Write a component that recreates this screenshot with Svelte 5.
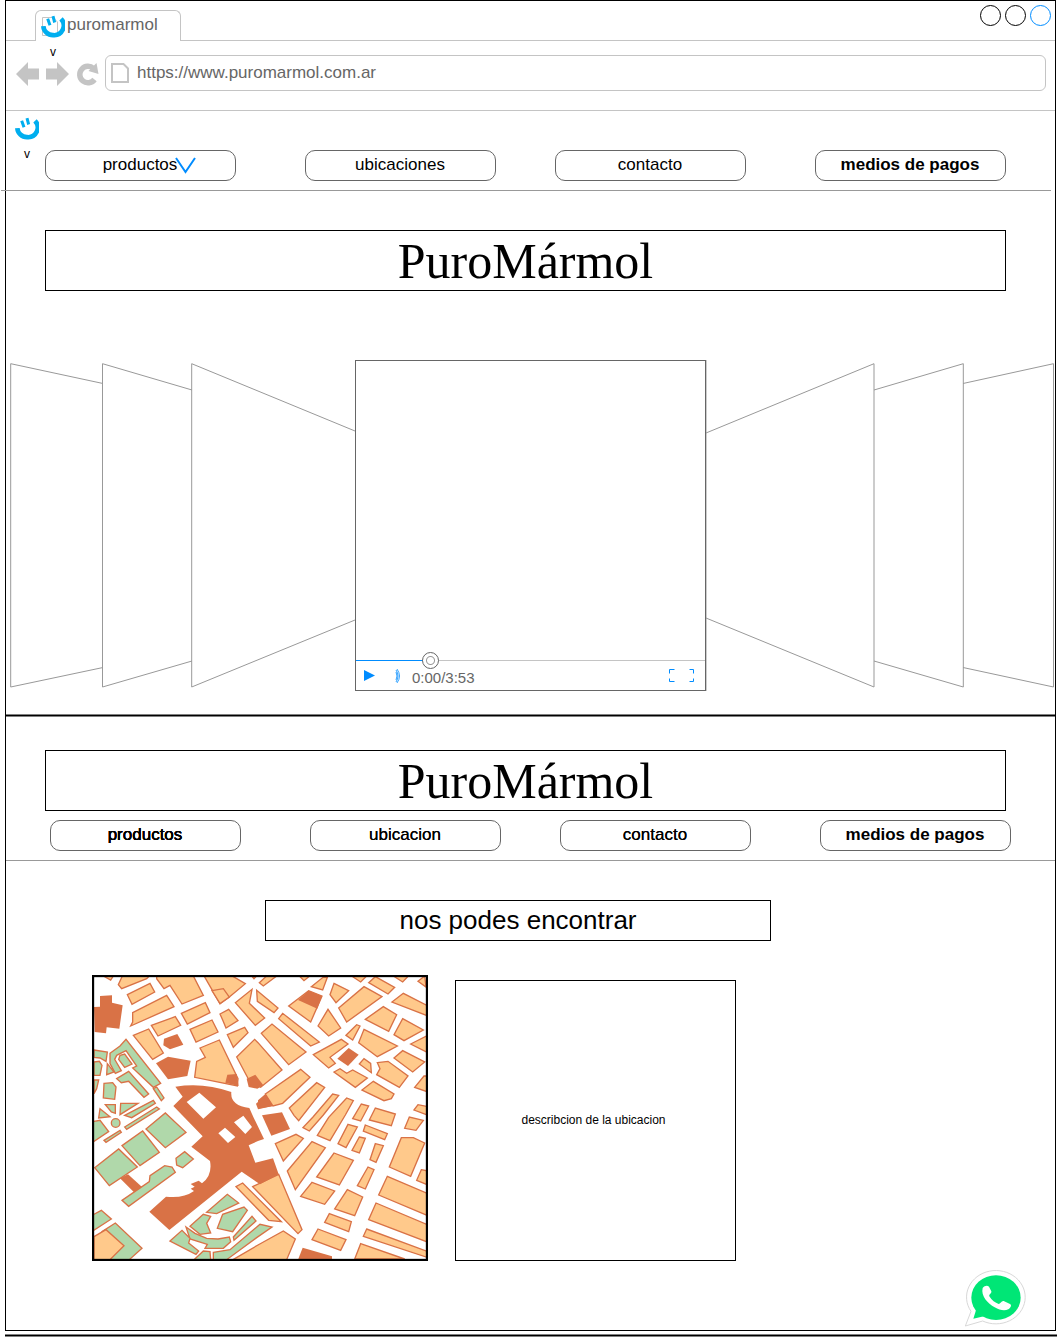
<script>
  const topMenu = [
    { label: 'productos', open: true },
    { label: 'ubicaciones' },
    { label: 'contacto' },
    { label: 'medios de pagos', bold: true }
  ];
  const placesMenu = [
    { label: 'productos', heavy: true },
    { label: 'ubicacion', firm: true },
    { label: 'contacto', firm: true },
    { label: 'medios de pagos', bold: true }
  ];

  let progress = $state(20);
  let url = $state('https://www.puromarmol.com.ar');

  // City map, drawn in four tiles; every entry is one block of buildings or one park.
  const tiles = [
    {
      x: 0, y: 0,
      blocks: [
        '40,12 70,12 62,24', '97,12 85,38 95,50 170,20 180,10', '112,68 180,34 194,60 126,97',
        '128,122 230,70 252,104 122,162 128,150', '200,8 200,20 222,50 240,40 276,96 340,70 308,8',
        '184,160 256,134 272,160 204,192', '130,190 176,171 220,243 188,262',
        '274,124 346,92 360,122 292,156', '300,172 366,144 384,180 318,210',
        '390,126 416,112 444,146 408,168 398,144', '340,8 390,95 418,75 466,35 420,8',
        '366,56 400,50 418,75 390,95', '436,92 486,52 478,94 524,138 496,160',
        '500,55 564,108 552,122 502,88', '508,32 532,10 560,12 520,42', '482,8 504,8 492,20',
        '412,188 464,166 474,182 430,226', '330,228 388,204 444,320 442,342 314,316 320,268 346,256',
        '440,255 494,202 504,212 576,294 512,346 480,330'
      ],
      parks: [
        '12,234 52,240 48,268 30,258 12,256', '12,270 28,268 36,280 30,310 12,310', '50,308 52,275 72,300',
        '60,244 90,222 108,202 212,334 190,346 128,288 140,282 108,236 80,250 74,262 94,296 76,304 60,275',
        '190,350 200,345 222,378 214,386', '90,250 104,246 126,276 104,286 86,262',
        '80,320 116,298 176,366 162,376 116,328 94,332', '42,334 68,332 78,345 74,382 40,378',
        '12,324 26,324 20,350 12,365', '46,398 76,398 76,424 64,420', '92,394 144,394 90,428',
        '30,410 60,434 26,438', '104,430 190,385 196,394 125,437', '104,465 200,405 208,411 110,472'
      ],
      landmarks: [
        '30,72 66,70 66,92 98,100 88,170 50,166 48,184 14,180 12,105 30,104',
        '222,200 262,186 280,218 240,232 220,220', '198,274 234,254 302,266 292,312 234,322',
        '412,308 440,306 446,342 406,332', '470,320 496,308 520,340 502,350 476,345',
        '516,430 576,421 600,471 544,491', '498,395 528,368 549,402 504,412'
      ]
    },
    {
      x: 504, y: 0,
      blocks: [
        '160,44 195,16 208,16 194,54', '120,8 155,12 138,26', '275,8 330,8 308,30', '400,8 455,8 434,30',
        '480,28 500,12 504,45', '228,34 272,56 234,92 216,68', '332,32 352,14 410,46 390,66',
        '402,90 436,64 510,102 510,132', '242,108 318,44 372,74 266,150', '92,102 152,56 192,72 158,150',
        '180,162 210,112 248,168 212,192', '322,142 376,104 416,128 392,178',
        '434,140 496,174 438,206 408,188', '62,140 74,124 184,210 158,222', '10,184 42,156 144,240 92,278',
        '264,190 296,158 306,162 284,204', '318,172 418,222 358,254 302,212', '458,216 510,190 510,242',
        '166,248 250,202 270,216 216,256 232,274 212,288', '304,276 318,260 338,274 340,302',
        '228,300 246,290 266,304 284,294 328,318 292,346', '358,272 390,268 450,312 424,346 356,308 366,290',
        '408,258 434,236 500,270 464,300', '312,354 346,328 408,366 400,380 378,386',
        '470,346 498,312 510,312 510,360', '468,414 480,398 510,404 510,430',
        '22,366 128,292 156,316 74,394 45,402', '94,408 176,332 200,346 122,446 108,430',
        '135,467 154,477 196,429 242,370 224,366 165,435', '178,490 212,436 266,378 286,386 262,429 216,506',
        '284,440 310,396 332,402 308,447', '334,444 352,408 412,426 400,461'
      ],
      parks: [],
      landmarks: ['120,84 152,56 192,72 178,110', '238,260 272,228 302,248 270,282', '0,385 22,366 45,402 0,410']
    },
    {
      x: 0, y: 429,
      blocks: [],
      parks: [
        '8,20 30,16 56,50 8,82', '42,76 90,46 94,52 48,82', '168,42 226,-6 288,52 226,98',
        '96,92 158,48 208,112 150,152', '14,158 86,102 142,156 58,212',
        '258,130 284,110 310,132 278,158 260,150', '96,256 178,200 180,182 224,152 246,156 256,172 116,274',
        '8,300 34,286 64,312 8,348', '36,350 76,324 156,400 118,434 60,434',
        '350,292 412,238 446,264 380,296', '382,340 398,298 462,276 472,286 428,350',
        '300,334 340,298 362,304 350,325 362,354 330,358',
        '288,336 315,355 350,370 384,372 418,366 422,380 400,400 345,400 352,388 300,372',
        '240,378 276,346 300,370 296,384 326,408 318,418', '430,366 486,304 498,318 432,376',
        '312,434 340,408 360,410 362,434', '370,412 420,404 510,328 546,336 500,368 410,434 370,434'
      ],
      landmarks: ['90,190 114,178 156,216 132,232']
    },
    {
      x: 504, y: 429,
      blocks: [
        '52,86 114,58 136,70 76,138', '88,168 162,80 202,98 112,224', '270,28 298,36 264,98 240,86',
        '304,66 322,70 304,114 282,106', '322,30 388,56 380,74 316,48', '440,40 454,6 496,16 474,46',
        '430,68 466,68 500,84 458,184 394,156', '352,86 376,92 354,142 336,134',
        '228,114 286,136 244,210 176,186', '330,156 348,164 322,222 298,212', '490,164 510,168 510,210 476,196',
        '388,184 510,236 510,302 362,240', '162,202 230,228 200,268 128,244',
        '268,224 314,246 290,302 230,282', '354,264 510,330 510,382 332,314',
        '214,296 280,320 272,350 200,322', '326,342 510,410 510,428 316,364',
        '180,342 264,374 248,406 162,374', '308,386 440,432 290,432',
        '-16,215 62,178 132,344 120,356', '-66,215 -46,204 70,320 32,316',
        '-75,434 0,390 76,348 112,372 86,434', '-492,365 -456,344 -402,392 -444,434 -492,434'
      ],
      parks: [],
      landmarks: ['134,398 222,424 222,434 120,434']
    }
  ];
</script>

{#snippet smile()}
  <svg class="smile" viewBox="46 350 72 68" aria-hidden="true">
    <path d="M53 383A29 29 0 0 0 82 410A29 29 0 0 0 106 361" fill="none" stroke="#00aeef" stroke-width="14" />
    <path d="M66 361L73 380M82 353L87 372" stroke="#00aeef" stroke-width="9" />
  </svg>
{/snippet}

{#snippet menu(items)}
  {#each items as item}
    <button type="button" class="pill" class:bold={item.bold} class:heavy={item.heavy} class:firm={item.firm}>
      <span class="pill-label">
        {item.label}
        {#if item.open}
          <svg class="chevron" viewBox="0 0 21 17" aria-hidden="true"><path d="M1 1L10.500 15L20 1" fill="none" stroke="#008cff" stroke-width="2" /></svg>
        {/if}
      </span>
    </button>
  {/each}
{/snippet}

<div class="page">
  <div class="frame">
    <div class="tabs">
      <div class="tab">
        <span class="tab-icon">
          <svg class="tab-doc" viewBox="0 0 16 19" aria-hidden="true"><path d="M.5.5H11L15.500 5V18.500H.5Z" fill="none" stroke="#c4c4c4" /></svg>
          <span class="tab-brand">{@render smile()}<span class="caption">v</span></span>
        </span>
        <span>puromarmol</span>
      </div>
      <div class="controls">
        <button type="button" aria-label="Minimizar"></button>
        <button type="button" aria-label="Maximizar"></button>
        <button type="button" class="close" aria-label="Cerrar"></button>
      </div>
    </div>

    <div class="toolbar">
      <div class="tools">
        <button type="button" class="tool" aria-label="Atrás">
          <svg viewBox="0 0 24 24"><path d="M0 12L12 0V6.500H23V17.500H12V24Z" fill="#c4c4c4" /></svg>
        </button>
        <button type="button" class="tool" aria-label="Adelante">
          <svg viewBox="0 0 24 24"><path d="M23 12L11 0V6.500H0V17.500H11V24Z" fill="#c4c4c4" /></svg>
        </button>
        <button type="button" class="tool" aria-label="Recargar">
          <svg viewBox="0 0 24 24"><path d="M18.500 17.500A8.200 8.200 0 1 1 17.500 6.500" fill="none" stroke="#c4c4c4" stroke-width="5.500" /><path d="M20.500 1L22.500 12L12.500 9Z" fill="#c4c4c4" /></svg>
        </button>
      </div>
      <label class="address">
        <svg viewBox="0 0 18 20" aria-hidden="true"><path d="M1 1H12.500L17 5.500V19H1Z" fill="none" stroke="#c4c4c4" stroke-width="2" /></svg>
        <input type="text" aria-label="Dirección" bind:value={url} />
      </label>
    </div>

    <header>
      <a class="brand" href="#inicio" aria-label="Inicio">{@render smile()}<span class="caption">v</span></a>
      <nav>{@render menu(topMenu)}</nav>
    </header>

    <h1 class="title">PuroMármol</h1>

    <section class="carousel">
      <svg class="slides" viewBox="6 360 349 331" preserveAspectRatio="none" aria-hidden="true">
        <path d="M103 383.500L10.700 363.700V687L103 667.500M192 390L102.500 363.700V687L192 661M355 431L191.700 363.700V687L355 620" />
      </svg>
      <div class="video">
        <div class="screen"></div>
        <input class="seek" type="range" min="0" max="100" aria-label="Progreso" bind:value={progress} />
        <div class="player">
          <button type="button" aria-label="Reproducir">
            <svg width="11" height="11" viewBox="0 0 11 11"><path d="M0 0L11 5.500L0 11Z" fill="#008cff" /></svg>
          </button>
          <button type="button" class="volume" aria-label="Volumen">
            <svg width="6" height="16" viewBox="0 0 6 16"><path d="M1 4Q3 8 1 12M1 2Q5 8 1 14M2 1Q7 8 2 15" fill="none" stroke="#008cff" stroke-width=".8" /></svg>
          </button>
          <span class="time">0:00/3:53</span>
          <button type="button" class="full" aria-label="Pantalla completa">
            <svg width="26" height="14" viewBox="0 0 26 14"><path d="M5.500.5H.5V4.500M.5 9.500V12.500H5.500M20.500.5H24.500V4.500M24.500 9.500V12.500H20.500" fill="none" stroke="#008cff" /></svg>
          </button>
        </div>
      </div>
      <svg class="slides" viewBox="706 360 349 331" preserveAspectRatio="none" aria-hidden="true">
        <path d="M706 433L874 363.700V687L706 618M874 390L963.300 363.700V687L874 661M963 383.500L1053.500 363.700V687L963 667.500" />
      </svg>
    </section>

    <div class="rule"></div>

    <h2 class="title second">PuroMármol</h2>
    <nav class="places-nav">{@render menu(placesMenu)}</nav>

    <section class="places">
      <h3>nos podes encontrar</h3>
      <div class="cards">
        <svg class="map" viewBox="6 9 1008 858" role="img" aria-label="Mapa de la ubicación">
          {#each tiles as tile}
            <g transform="translate({tile.x} {tile.y})">
              {#each tile.parks as points}<polygon class="park" {points} />{/each}
              {#each tile.blocks as points}<polygon class="block" {points} />{/each}
              {#each tile.landmarks as points}<polygon class="landmark" {points} />{/each}
            </g>
          {/each}
          <circle class="park" cx="77" cy="453" r="13" />
          <path
            class="landmark"
            fill-rule="evenodd"
            d="M256 344Q340 330 424 360Q420 400 478 408L490 435L522 501L504 507L476 520L496 572L549 559L566 607L510 637L455 599L238 774L178 719L228 674Q280 680 312 657L302 650L314 644L302 636L326 626L336 634Q368 610 360 567L304 524L338 493L276 429L250 402L278 374ZM290 390L328 362L378 406L340 440ZM385 484L405 467L436 495L414 513ZM432 451L460 431L486 465L466 486Z"
          />
          <rect x="9" y="12" width="1002" height="852" fill="none" stroke="#000" stroke-width="7" />
        </svg>
        <p class="description">describcion de la ubicacion</p>
      </div>
      <a class="whatsapp" href="#whatsapp" aria-label="WhatsApp">
        <svg viewBox="45 28 183 171">
          <path d="M46 196L63 152A88 80 0 1 1 98 181Z" fill="#fff" stroke="#d8d8d8" stroke-width="3" />
          <ellipse cx="138" cy="111" rx="74" ry="67" fill="#00e676" />
          <path d="M70 174L79 145L108 165Z" fill="#00e676" />
          <path d="M98 82C104 74 113 73 117 78L124 92C126 97 116 102 118 107C125 119 136 127 146 130C151 130 155 119 161 121L180 130C186 133 182 142 175 146C164 152 149 149 134 140C113 128 92 106 98 82Z" fill="#fff" />
        </svg>
      </a>
    </section>
  </div>
  <div class="rule end"></div>
</div>

<style>
  :global(body) {
    background: #fff;
  }
  .page {
    font-family: 'Liberation Sans', Arial, sans-serif;
    font-size: 17px;
    color: #000;
    padding-bottom: 5px;
  }
  .page * {
    box-sizing: border-box;
  }
  button {
    font: inherit;
    color: inherit;
    background: none;
    border: 0;
    padding: 0;
  }
  svg {
    display: block;
  }
  .frame {
    margin: 0 1px 0 5px;
    border: 1px solid #000;
  }
  .tabs {
    display: flex;
    justify-content: space-between;
    height: 40px;
    border-bottom: 1px solid #c4c4c4;
  }
  .tab {
    display: flex;
    gap: 9px;
    width: 146px;
    height: 31px;
    margin: 9px 0 0 29px;
    padding: 6px 6px 0;
    border: 1px solid #c4c4c4;
    border-bottom: 0;
    border-radius: 6px 6px 0 0;
    background: #fff;
    color: #666;
    line-height: 16px;
  }
  .tab-icon {
    position: relative;
    width: 16px;
  }
  .tab-doc {
    width: 16px;
    height: 19px;
  }
  .tab-brand {
    position: absolute;
    top: -2px;
    left: -1px;
    width: 24px;
  }
  .smile {
    width: 24px;
    height: 23px;
  }
  .caption {
    display: block;
    padding-top: 7px;
    font-size: 12px;
    line-height: 14px;
    text-align: center;
    color: #000;
  }
  .controls {
    display: flex;
    gap: 4px;
    padding: 4px 4px 0 0;
  }
  .controls button {
    width: 21px;
    height: 21px;
    border: 1px solid #000;
    border-radius: 50%;
  }
  .controls .close {
    border-color: #008cff;
  }
  .toolbar {
    display: flex;
    gap: 5px;
    height: 70px;
    padding: 14px 9px 0 10px;
    border-bottom: 1px solid #c4c4c4;
  }
  .tools {
    display: flex;
    gap: 6px;
    padding-top: 7px;
  }
  .tool {
    width: 24px;
    height: 24px;
  }
  .address {
    display: flex;
    flex: 1;
    align-items: center;
    gap: 8px;
    height: 36px;
    padding: 0 5px;
    border: 1px solid #c4c4c4;
    border-radius: 6px;
  }
  .address svg {
    width: 18px;
    height: 20px;
  }
  .address input {
    flex: 1;
    min-width: 0;
    height: 32px;
    padding: 0;
    border: 0;
    outline: 0;
    font: inherit;
    color: #666;
  }
  header {
    display: flex;
    margin: 0 4px 0 -5px;
    padding: 0 45px 9px 14px;
    border-bottom: 1px solid #999;
  }
  .brand {
    width: 24px;
    margin: 6px 6px 0 0;
    text-decoration: none;
  }
  nav {
    display: grid;
    flex: 1;
    grid-template-columns: 260fr 250fr 260fr 191fr;
    margin-top: 39px;
  }
  .pill {
    width: 191px;
    height: 31px;
    padding: 0 1px 2px 0;
    border: 1px solid #666;
    border-radius: 10px;
    text-align: center;
  }
  .pill-label {
    position: relative;
  }
  .chevron {
    position: absolute;
    top: 2px;
    left: calc(100% - 2px);
    width: 21px;
    height: 17px;
  }
  .bold {
    font-weight: bold;
  }
  .firm {
    text-shadow: 0 0 0 #000;
  }
  .heavy {
    text-shadow: 0 0 0 #000, 0 0 0 #000, 0 0 0 #000;
  }
  .title {
    margin: 39px 49px 0 39px;
    padding-top: 2px;
    border: 1px solid #000;
    font-family: 'Liberation Serif', 'Times New Roman', serif;
    font-size: 50px;
    font-weight: normal;
    line-height: 57px;
    text-align: center;
  }
  .carousel {
    display: flex;
    height: 331px;
    margin: 69px 0 23px;
  }
  .slides {
    flex: 1;
    min-width: 0;
    height: 331px;
  }
  .slides path {
    fill: none;
    stroke: #999;
    vector-effect: non-scaling-stroke;
  }
  .video {
    display: flex;
    flex-direction: column;
    width: 351px;
    border: 1px solid #666;
    box-shadow: 1px 0 0 #ccc;
  }
  .screen {
    flex: 1;
  }
  .seek {
    appearance: none;
    width: 100%;
    height: 17px;
    margin: 0;
    background: linear-gradient(90deg, #008cff 21%, #c4c4c4 21%) center / 100% 1px no-repeat;
  }
  .seek::-webkit-slider-thumb {
    appearance: none;
    width: 17px;
    height: 17px;
    border: 1px solid #666;
    border-radius: 50%;
    background: radial-gradient(circle, #fff 3px, #999 4px, #fff 5px);
  }
  .player {
    display: flex;
    align-items: center;
    height: 21px;
    padding: 0 10px 8px 8px;
    color: #666;
  }
  .volume {
    margin: 0 11px 0 20px;
  }
  .time {
    font-size: 15px;
    line-height: 18px;
    padding-top: 4px;
  }
  .full {
    margin-left: auto;
  }
  .rule {
    height: 3px;
    border: solid #808080;
    border-width: 1px 0;
    background: #000;
  }
  .rule.end {
    margin: 3px 0 0 5px;
  }
  .second {
    margin-top: 33px;
  }
  .places-nav {
    margin: 9px 44px 9px;
  }
  .places {
    border-top: 1px solid #999;
    padding-bottom: 3px;
  }
  h3 {
    margin: 39px 284px 34px 259px;
    border: 1px solid #000;
    font-size: 26px;
    font-weight: normal;
    line-height: 39px;
    text-align: center;
  }
  .cards {
    display: flex;
    align-items: flex-end;
    gap: 27px;
    padding-left: 86px;
  }
  .map {
    width: 336px;
    height: 286px;
  }
  .park,
  .block {
    stroke: #d97246;
    stroke-width: 4;
  }
  .park {
    fill: #b0d8aa;
  }
  .block {
    fill: #ffc98b;
  }
  .landmark {
    fill: #d97246;
  }
  .description {
    width: 281px;
    height: 281px;
    margin: 0;
    padding-right: 4px;
    border: 1px solid #000;
    font-size: 12px;
    line-height: 279px;
    text-align: center;
  }
  .whatsapp {
    display: block;
    width: 61px;
    margin: 9px 29px 0 auto;
  }
  .whatsapp svg {
    width: 61px;
    height: 57px;
  }
</style>
